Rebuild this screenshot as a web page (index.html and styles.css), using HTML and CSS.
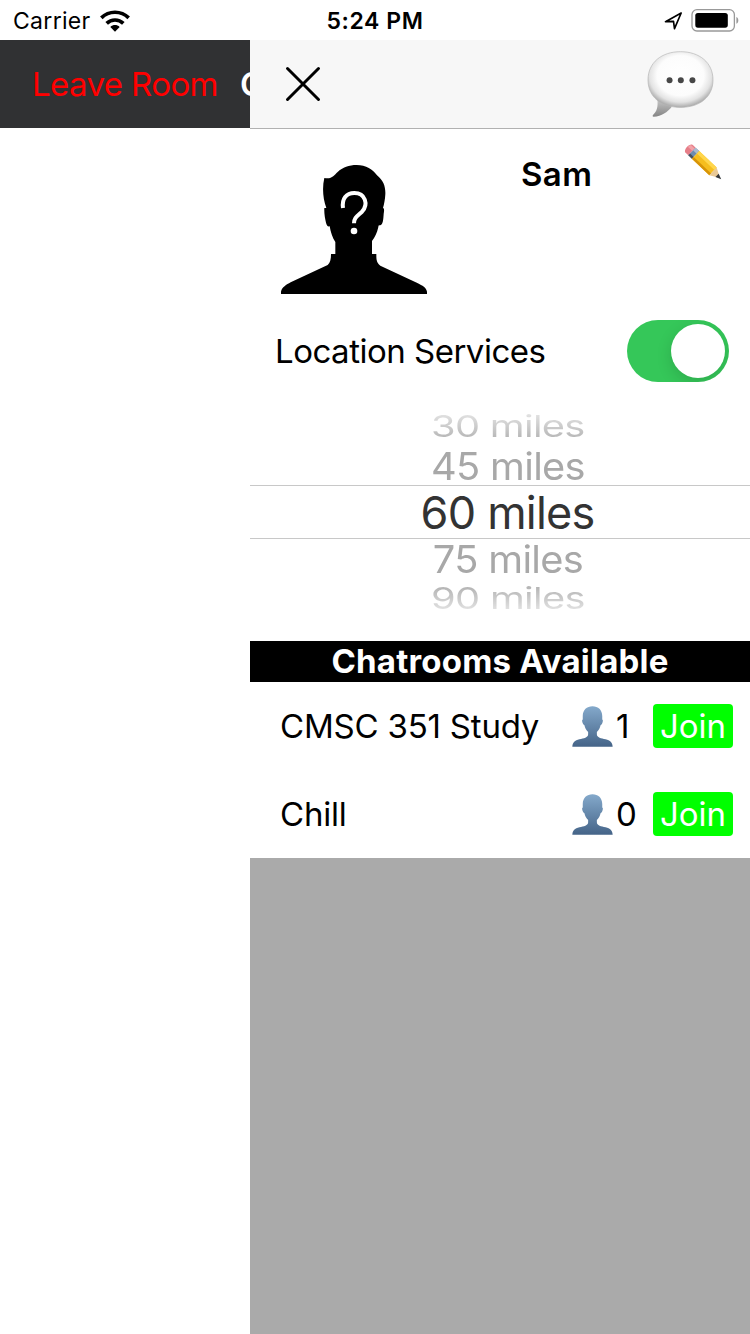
FILE: index.html
```html
<!DOCTYPE html>
<html lang="en">
<head>
<meta charset="utf-8">
<title>Chatrooms</title>
<link rel="stylesheet" href="styles.css">
</head>
<body>
<svg class="defs" width="0" height="0" aria-hidden="true">
  <defs>
    <linearGradient id="person-fill" x1="0" y1="0" x2="0" y2="1"><stop offset="0" stop-color="#84a9cb"/><stop offset="1" stop-color="#456488"/></linearGradient>
    <radialGradient id="bubble-fill" cx=".5" cy=".43" r=".58"><stop offset="0" stop-color="#fff"/><stop offset=".62" stop-color="#fcfcfc"/><stop offset=".82" stop-color="#e3e3e3"/><stop offset="1" stop-color="#a4a4a4"/></radialGradient>
    <linearGradient id="tail-fill" x1="0" y1="0" x2="0" y2="1"><stop offset="0" stop-color="#c8c8c8"/><stop offset="1" stop-color="#858585"/></linearGradient>
    <symbol id="person" viewBox="0 0 120 122"><path fill="url(#person-fill)" d="M60 1C43 1 31 12 31 30v10c-3 1-2 6 0 11 1 3 3 5 5 6 2 9 5 14 11 20v7c0 10-13 12-26 15C7 102 1 108 0 121h120c-1-13-7-19-21-22-13-3-26-5-26-15v-7c6-6 9-11 11-20 2-1 4-3 5-6 2-5 3-10 0-11V30C89 12 77 1 60 1Z"/></symbol>
  </defs>
</svg>
<div class="status">
  <div class="status-left">
    <span class="carrier">Carrier</span>
    <svg class="wifi" viewBox="0 0 90 66"><g fill="none" stroke="#000"><path stroke-width="11" d="M4 23.500C27 1 63 1 86 23.500"/><path stroke-width="11" d="M20 40C34 26.500 56 26.500 70 40"/></g><path d="M31 51c8-8 20-8 28 0L45 65Z"/></svg>
  </div>
  <span class="clock">5:24 PM</span>
  <div class="status-right">
    <svg class="arrow" viewBox="0 0 54 54"><path fill="none" stroke="#000" stroke-width="5" stroke-linejoin="round" d="M3 29 50 3 30 50 27 28Z"/></svg>
    <svg class="battery" viewBox="0 0 144 70"><rect x="2" y="2" width="129" height="65" rx="15" fill="none" stroke="#999" stroke-width="4"/><rect x="12" y="12" width="99" height="45" rx="8"/><path fill="#999" d="M137 24c8 3 8 18 0 21Z"/></svg>
  </div>
</div>
<div class="screen">
  <div class="room">
    <div class="room-nav"><span class="leave">Leave Room</span><span class="room-title">C</span></div>
  </div>
  <div class="drawer">
    <div class="drawer-nav">
      <svg class="close" viewBox="0 0 36 36"><path d="M2.500 2.500 33.500 33.500M33.500 2.500 2.500 33.500" fill="none" stroke="#000" stroke-width="3" stroke-linecap="round"/></svg>
      <svg class="bubble" viewBox="0 0 200 202"><path fill="url(#tail-fill)" d="M30 145c3 24-1 37-13 48-2 3-1 5 2 5 25-1 41-14 55-30Z"/><path fill="url(#bubble-fill)" stroke="#b4b4b4" stroke-width="2" d="M100 2C43 2 2 35 2 87s40 83 98 83 98-31 98-83S157 2 100 2Z"/><g fill="#484848"><circle cx="67" cy="88" r="9"/><circle cx="101" cy="88" r="9"/><circle cx="136" cy="88" r="9"/></g></svg>
    </div>
    <div class="profile">
      <svg class="avatar" viewBox="30 48 468 420">
        <path d="M178 114c22 5 29-8 40-18 15-14 34-21 57-21 28 0 49 13 61 31 20 16 26 35 25 57-1 15-3 28-7 41 5 1 3 10 2 18-1 17-2 31-10 34-5 1-5-1-6 5-4 18-10 31-19 42v39h13c0 16 0 25 12 35l111 52c16 8 27 14 29 26v7H48v-7c3-13 16-21 29-28l111-52c8-7 10-18 10-33h13v-36c-9-13-14-30-17-47-6 2-9-4-11-11-3-12-6-29-5-44h6c-10-28-13-61-6-90Z"/>
        <path d="M234 204c-4-28 10-45 34-45 33 0 43 34 23 56-15 14-24 18-24 35" fill="none" stroke="#fff" stroke-width="12"/><circle cx="267" cy="273" r="10" fill="#fff"/>
      </svg>
      <span class="name">Sam</span>
      <svg class="pencil" viewBox="0 0 114 114"><g transform="translate(18 20) rotate(43.500)"><path fill="#e67e88" d="M0-16h-4C-15-14-15 14-4 16h12v-32Z"/><path fill="#f3a2a9" d="M-8-12H8v10H-11Z"/><path fill="#6d8bae" d="M8-16h15v32H8Z"/><path fill="#a9bacd" d="M8-16h15v11H8Z"/><path fill="#48515d" d="M8 8h15v8H8Z"/><path fill="#f6be1e" d="M23-16h72v32H23Z"/><path fill="#ffd64c" d="M23-16h72v10H23Z"/><path fill="#d79408" d="M23 8h72v8H23Z"/><path fill="#e9c996" d="m95-16 29 16-29 16Z"/><path fill="#33363a" d="m112-7 17 7-17 7Z"/></g></svg>
    </div>
    <div class="location"><span class="location-label">Location Services</span><div class="switch"><div class="knob"></div></div></div>
    <div class="picker">
      <div class="option outer"><span class="far-top">30 miles</span></div>
      <div class="option near"><span class="mid">45 miles</span></div>
      <div class="option selected"><span>60 miles</span></div>
      <div class="option near"><span class="mid">75 miles</span></div>
      <div class="option outer"><span class="far-bottom">90 miles</span></div>
    </div>
    <div class="section"><span>Chatrooms Available</span></div>
    <div class="chat"><span class="chat-name study">CMSC 351 Study</span><svg class="person"><use href="#person"/></svg><span class="count">1</span><div class="join"><span>Join</span></div></div>
    <div class="chat"><span class="chat-name">Chill</span><svg class="person"><use href="#person"/></svg><span class="count">0</span><div class="join"><span>Join</span></div></div>
    <div class="rest"></div>
  </div>
</div>
</body>
</html>
```
FILE: styles.css
```css
* { box-sizing: border-box; }
body { margin: 0; width: 750px; height: 1334px; display: flex; flex-direction: column; overflow: hidden; background: #fff; color: #000; font-family: Inter, "Liberation Sans", sans-serif; font-size: 33px; line-height: 40px; white-space: nowrap; }
svg { display: block; flex: none; }
.defs { position: absolute; }
.status { height: 40px; display: grid; grid-template-columns: 1fr auto 1fr; align-items: center; font-size: 23px; }
.status-left { display: flex; align-items: center; gap: 9px; padding-left: 13px; }
.carrier { letter-spacing: .3px; padding-top: 1px; }
.wifi { width: 30px; height: 22px; }
.clock { font-weight: 600; letter-spacing: .6px; padding-top: 1px; }
.status-right { display: flex; justify-content: flex-end; align-items: center; gap: 8px; padding-right: 11px; }
.arrow { width: 19px; height: 18px; }
.battery { width: 48px; height: 23px; }
.screen { flex: 1; display: flex; min-height: 0; }
.room { width: 250px; flex: none; overflow: hidden; }
.room-nav { height: 88px; display: flex; align-items: center; background: #303133; padding-left: 32px; }
.leave { color: #f00; width: 208px; flex: none; letter-spacing: -.6px; }
.room-title { color: #fff; font-weight: 600; }
.drawer { width: 500px; display: flex; flex-direction: column; }
.drawer-nav { height: 89px; display: flex; justify-content: space-between; align-items: flex-start; padding: 11px 36px 0 35px; background: #f7f7f7; border-bottom: 1px solid #b1b1b1; }
.close { width: 36px; height: 36px; margin-top: 15px; }
.bubble { width: 67px; height: 67px; }
.profile { height: 181px; display: flex; align-items: flex-start; padding: 14px 28px 0 25px; }
.avatar { width: 156px; height: 140px; margin-top: 13px; }
.name { flex: 1; font-weight: 600; letter-spacing: .4px; padding: 11px 0 0 90px; }
.pencil { width: 38px; height: 38px; }
.location { height: 82px; display: flex; align-items: center; justify-content: space-between; padding: 0 21px 0 25px; }
.location-label { letter-spacing: -.5px; }
.switch { width: 102px; height: 62px; padding: 4px; border-radius: 31px; background: #35c759; display: flex; justify-content: flex-end; overflow: hidden; }
.knob { width: 54px; height: 54px; border-radius: 50%; background: #fff; box-shadow: 0 5px 16px rgba(0, 0, 0, .14); }
.picker { height: 249px; padding-top: 14px; font-size: 45px; letter-spacing: -.8px; color: #333; }
.option { display: flex; align-items: center; justify-content: center; padding-left: 15px; }
.option span { display: block; }
.outer { height: 40px; }
.near { height: 39px; color: #a8a8a8; }
.selected { height: 54px; border: solid #c8c8c8; border-width: 1px 0; padding-top: 1px; }
.mid { transform: scale(.885, .85); }
.far-top, .far-bottom { transform: scale(.885, .66); color: transparent; background: linear-gradient(#e4e4e4, #b5b5b5); background-clip: text; -webkit-background-clip: text; }
.far-bottom { background-image: linear-gradient(#b0b0b0, #e4e4e4); }
.section { height: 41px; background: #000; color: #fff; font-weight: 700; letter-spacing: .2px; text-align: center; }
.chat { height: 88px; display: flex; align-items: center; padding: 0 17px 0 30px; }
.chat-name { width: 292px; letter-spacing: -.2px; }
.person { width: 41px; height: 41px; }
.count { width: 40px; padding-left: 3px; }
.join { width: 80px; height: 44px; border-radius: 4px; background: #0f0; color: #fff; display: flex; align-items: center; justify-content: center; }
.rest { flex: 1; background: #aaa; }
```
